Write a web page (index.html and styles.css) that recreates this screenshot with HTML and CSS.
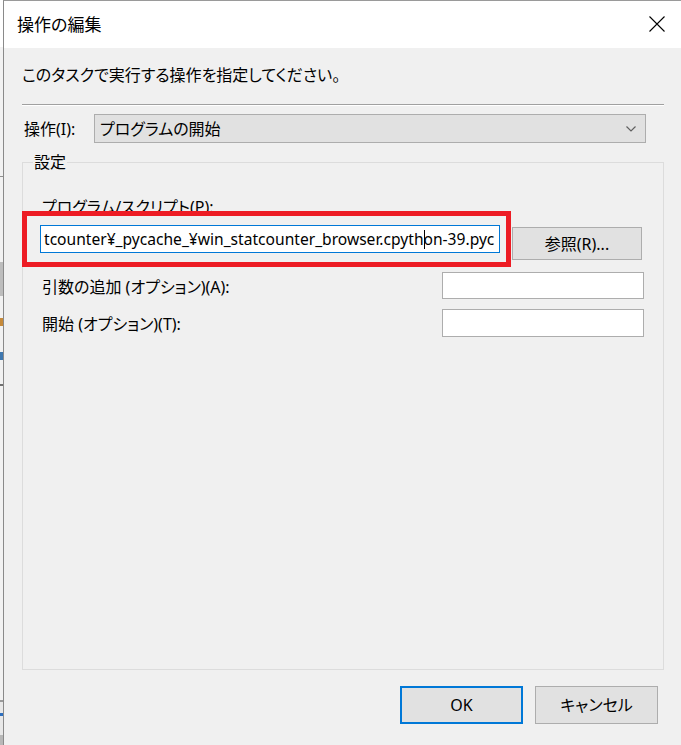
FILE: index.html
```html
<!DOCTYPE html>
<html lang="ja">
<head>
<meta charset="utf-8">
<title>操作の編集</title>
<link rel="stylesheet" href="styles.css">
</head>
<body>
<div class="screen">
  <div class="bgstrip"></div>
  <div class="dialog">
    <div class="titlebar">
      <span class="title">操作の編集</span>
      <svg class="close" width="16" height="16" viewBox="0 0 16 16" aria-hidden="true"><path d="M0.5 0.5 L15.5 15.5 M15.5 0.5 L0.5 15.5" stroke="#000" stroke-width="1.1" fill="none"/></svg>
    </div>
    <div class="content">
      <p class="instr">このタスクで実行する操作を指定してください。</p>
      <div class="sep"></div>
      <div class="actionrow">
        <span class="actionlbl">操作(I):</span>
        <div class="combo">
          <span>プログラムの開始</span>
          <svg class="chev" width="10" height="6" viewBox="0 0 10 6" aria-hidden="true"><path d="M0.5 0.5 L5 5 L9.5 0.5" stroke="#606060" stroke-width="1.2" fill="none"/></svg>
        </div>
      </div>
      <fieldset class="group">
        <legend>設定</legend>
        <div class="prog">
          <div class="lbl">プログラム/スクリプト(P):</div>
          <div class="progrow">
            <div class="field focus">tcounter¥_pycache_¥win_statcounter_browser.cpyth<span class="caret"></span>on-39.pyc</div>
            <div class="btn browse">参照(R)...</div>
          </div>
          <div class="highlight"></div>
        </div>
        <div class="optrow first">
          <div class="lbl">引数の追加 (オプション)(A):</div>
          <div class="field small"></div>
        </div>
        <div class="optrow second">
          <div class="lbl">開始 (オプション)(T):</div>
          <div class="field small"></div>
        </div>
      </fieldset>
      <div class="footer">
        <div class="btn ok">OK</div>
        <div class="btn cancel">キャンセル</div>
      </div>
    </div>
  </div>
</div>
</body>
</html>
```

FILE: styles.css
```css
html, body {
  margin: 0;
  padding: 0;
}
body {
  width: 681px;
  height: 745px;
  overflow: hidden;
  background: #f0f0f0;
  font-family: "Noto Sans", "Noto Sans CJK JP", sans-serif;
  font-feature-settings: "palt";
  color: #000;
}
.screen {
  display: flex;
  height: 745px;
}
.bgstrip {
  width: 3px;
  flex: none;
  background: linear-gradient(to bottom,
    #ffffff 0 47px, #f2f2f2 47px 176px, #8f8f8f 176px 177px,
    #f2f2f2 177px 262px, #bdbdbd 262px 296px, #f2f2f2 296px 318px,
    #c68a3a 318px 326px, #f2f2f2 326px 352px, #3f78b0 352px 360px,
    #f2f2f2 360px 384px, #707070 384px 386px, #f2f2f2 386px 700px,
    #9a9a9a 700px 702px, #e8e8e8 702px 713px, #2d6fbf 713px 716px,
    #e8e8e8 716px 735px, #b8b8b8 735px 745px);
}
.dialog {
  flex: 1;
  min-width: 0;
  border-left: 1px solid #8a8a8a;
  border-top: 1px solid #9a9a9a;
  background: #f0f0f0;
  display: flex;
  flex-direction: column;
}
.titlebar {
  height: 47px;
  flex: none;
  background: #fff;
  display: flex;
  align-items: center;
  padding-left: 13px;
}
.title {
  font-size: 17px;
  line-height: 24px;
}
.close {
  margin-left: auto;
  margin-right: 16px;
  margin-top: -1px;
}
.content {
  padding: 0 17px 0 18px;
  font-size: 16px;
}
.instr {
  margin: 15px 0 0 0;
  height: 24px;
  line-height: 24px;
  font-size: 16px;
}
.sep {
  margin-top: 17px;
  height: 1px;
  background: #a0a0a0;
  border-bottom: 1px solid #ffffff;
}
.actionrow {
  margin-top: 8px;
  height: 29px;
  display: flex;
  align-items: center;
}
.actionlbl {
  width: 70px;
  padding-left: 2px;
  line-height: 24px;
}
.combo {
  width: 552px;
  height: 29px;
  box-sizing: border-box;
  border: 1px solid #adadad;
  background: #e1e1e1;
  display: flex;
  align-items: center;
  padding-left: 5px;
  line-height: 24px;
}
.chev {
  margin-left: auto;
  margin-right: 9px;
}
.group {
  margin: 9px 0 0 0;
  padding: 0;
  height: 518px;
  box-sizing: border-box;
  border: 1px solid #dcdcdc;
  min-width: 0;
}
.group legend {
  margin-left: 10px;
  padding: 0 1px;
  line-height: 20px;
  font-size: 16px;
}
.prog {
  position: relative;
  margin-top: 23px;
  padding-left: 19px;
}
.lbl {
  line-height: 24px;
  height: 24px;
  white-space: nowrap;
}
.progrow {
  margin-top: 6px;
  display: flex;
  align-items: flex-start;
}
.field {
  box-sizing: border-box;
  background: #fff;
  border: 1px solid #adadad;
}
.field.focus {
  margin-left: -2px;
  width: 460px;
  height: 28px;
  border-color: #0078d7;
  padding-left: 3px;
  line-height: 26px;
  font-size: 15.6px;
  white-space: nowrap;
  overflow: hidden;
}
.caret {
  display: inline-block;
  width: 1px;
  height: 19px;
  background: #000;
  vertical-align: -4px;
  margin: 0 -1px 0 0;
}
.btn {
  box-sizing: border-box;
  background: #e1e1e1;
  border: 1px solid #adadad;
  display: flex;
  align-items: center;
  justify-content: center;
  line-height: 24px;
  font-size: 16px;
}
.browse {
  margin-left: 12px;
  margin-top: 2px;
  width: 130px;
  height: 33px;
}
.highlight {
  position: absolute;
  left: -1px;
  top: 16px;
  width: 489px;
  height: 56px;
  box-sizing: border-box;
  border: 5px solid #ed1c24;
}
.optrow {
  display: flex;
  align-items: flex-start;
  padding-left: 19px;
}
.optrow .lbl {
  padding-top: 3px;
}
.optrow.first {
  margin-top: 12px;
  height: 27px;
}
.optrow.second {
  margin-top: 10px;
  height: 28px;
}
.field.small {
  margin-left: auto;
  margin-right: 19px;
  width: 202px;
  height: 100%;
}
.footer {
  margin-top: 16px;
  display: flex;
  justify-content: flex-end;
  gap: 12px;
  margin-right: 6px;
}
.footer .btn {
  width: 123px;
  height: 38px;
}
.btn.ok {
  border: 2px solid #0078d7;
}
```
